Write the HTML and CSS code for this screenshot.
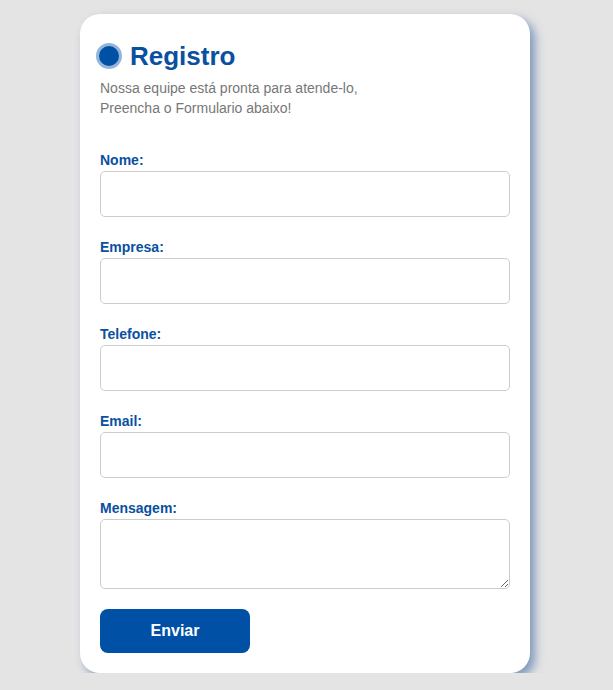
FILE: index.html
```html
<!DOCTYPE html>
<html lang="pt">
<head>
<meta charset="utf-8">
<title>Registro</title>
<link rel="stylesheet" href="styles.css">
</head>
<body>
<div class="card">
  <div class="header">
    <span class="dot"></span>
    <h1 class="title">Registro</h1>
  </div>
  <p class="subtitle">Nossa equipe está pronta para atende-lo,<br>Preencha o Formulario abaixo!</p>
  <form class="form">
    <label class="label" for="nome">Nome:</label>
    <input class="field" id="nome" type="text">
    <label class="label" for="empresa">Empresa:</label>
    <input class="field" id="empresa" type="text">
    <label class="label" for="telefone">Telefone:</label>
    <input class="field" id="telefone" type="text">
    <label class="label" for="email">Email:</label>
    <input class="field" id="email" type="text">
    <label class="label" for="msg">Mensagem:</label>
    <textarea class="field area" id="msg"></textarea>
    <button class="btn" type="button">Enviar</button>
  </form>
</div>
</body>
</html>
```
FILE: styles.css
```css
* { box-sizing: border-box; }
body {
  margin: 0;
  background: #e4e4e4;
  font-family: "Liberation Sans", Arial, sans-serif;
}
.card {
  width: 450px;
  margin: 14px 0 0 80px;
  background: #fff;
  border-radius: 20px;
  padding: 26px 20px 20px 20px;
  box-shadow: 5px 5px 10px rgba(30, 80, 150, 0.5);
}
.header {
  display: flex;
  align-items: center;
  gap: 8px;
  margin-left: -4px;
}
.dot {
  width: 26px;
  height: 26px;
  border-radius: 50%;
  background: #0050a5;
  border: 3px solid #93b4dc;
  flex: none;
}
.title {
  margin: 0;
  font-size: 26px;
  line-height: 32px;
  font-weight: bold;
  color: #0a50a0;
}
.subtitle {
  margin: 6px 0 0 0;
  font-size: 14px;
  line-height: 20px;
  color: #777;
}
.form {
  display: flex;
  flex-direction: column;
  margin-top: 34px;
}
.label {
  display: block;
  font-size: 14px;
  line-height: 16px;
  font-weight: bold;
  color: #0a50a0;
  margin-bottom: 3px;
}
.field {
  display: block;
  width: 410px;
  height: 46px;
  border: 1px solid #ccc;
  border-radius: 5px;
  margin: 0 0 22px 0;
  font-family: inherit;
  font-size: 14px;
  padding: 8px;
  background: #fff;
}
.area {
  height: 70px;
  margin-bottom: 20px;
}
.btn {
  width: 150px;
  height: 44px;
  border: none;
  border-radius: 8px;
  background: #0050a5;
  color: #fff;
  font-family: inherit;
  font-size: 16px;
  font-weight: bold;
}
```
